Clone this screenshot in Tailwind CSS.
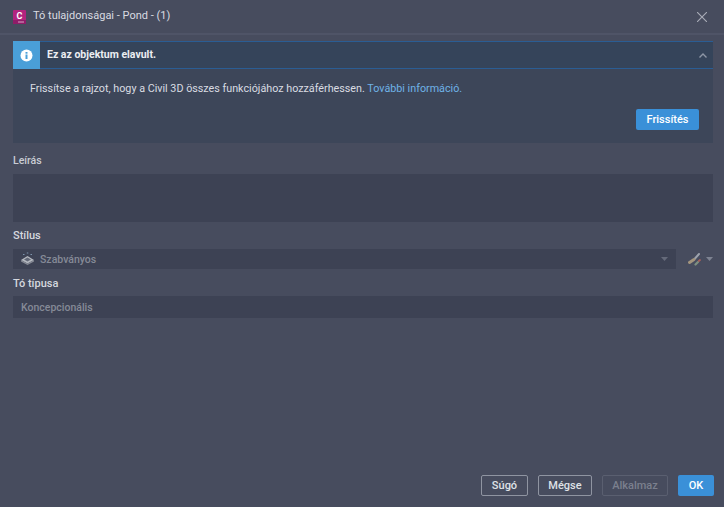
<!DOCTYPE html>
<html lang="en">
<head>
    <meta charset="UTF-8">
    <title>Tó tulajdonságai - Pond - (1)</title>
    <script src="https://cdn.jsdelivr.net/npm/@tailwindcss/browser@4"></script>
</head>
<body class="bg-[#474c5e] w-[724px] h-[507px] overflow-hidden flex flex-col font-['Roboto',sans-serif] text-[11px] text-[#d5d8df]">

    <!-- title bar -->
    <div class="h-[33px] shrink-0 flex items-center pl-[13px] pr-[17px] border-b-2 border-[#4f5467] box-content">
        <svg width="13" height="14" viewBox="0 0 13 14" class="mr-[7px]">
            <rect width="13" height="14" rx="1" fill="#b3237f"/>
            <rect y="10" width="13" height="4" fill="#8f1d68"/>
            <rect x="5" y="11.500" width="6" height="1" fill="#d9a5c6"/>
            <text x="6.500" y="8.500" text-anchor="middle" font-size="9" font-weight="700" fill="#fff" font-family="Roboto">C</text>
        </svg>
        <span class="text-[11px] text-[#d9dbe1]">Tó tulajdonságai - Pond - (1)</span>
        <svg width="10" height="10" viewBox="0 0 10 10" class="ml-auto" stroke="#a9adb8" stroke-width="1.1"><path d="M0 0 10 10M10 0 0 10"/></svg>
    </div>

    <div class="flex flex-col pl-[13px] pr-[11px] pt-[6px] flex-1">
        <!-- banner -->
        <div class="h-[102px] shrink-0 bg-[#3d4659] flex flex-col">
            <div class="h-[28px] shrink-0 flex items-center bg-[#35445a] border-y border-[#2a5d94]">
                <div class="w-[27px] h-[28px] -my-px bg-[#4a9fd8] flex items-center justify-center">
                    <svg width="13" height="13" viewBox="0 0 13 13">
                        <circle cx="6.500" cy="6.500" r="6" fill="#fff"/>
                        <rect x="5.500" y="5.500" width="2" height="4.500" fill="#4a9fd8"/>
                        <rect x="5.500" y="3" width="2" height="1.700" fill="#4a9fd8"/>
                    </svg>
                </div>
                <span class="ml-[7px] font-bold text-[10.5px] text-[#eceef2]">Ez az objektum elavult.</span>
                <svg width="8" height="5" viewBox="0 0 8 5" class="ml-auto mr-[6px]" fill="none" stroke="#8e96a6" stroke-width="1.4"><path d="M.5 4.500 4 1l3.500 3.500"/></svg>
            </div>
            <p class="mt-[12px] ml-[17px] leading-[16px] text-[10.75px] text-[#d9dce2]">Frissítse a rajzot, hogy a Civil 3D összes funkciójához hozzáférhessen. <span class="text-[#6fb2e6]">További információ.</span></p>
            <div class="flex justify-end mt-[12px] mr-[14px]">
                <button class="w-[63px] h-[21px] pt-[2px] rounded-[2px] bg-[#3a90d8] text-white text-[11px] font-medium">Frissítés</button>
            </div>
        </div>

        <label class="mt-[10px] h-[15px] leading-[16px] text-[10.5px] font-medium text-[#c9ccd4]">Leírás</label>
        <div class="mt-[6px] h-[48px] bg-[#3d4254]"></div>

        <label class="mt-[6px] h-[15px] leading-[16px] font-medium text-[#d5d8df]">Stílus</label>
        <div class="mt-[6px] flex items-center h-[20px]">
            <div class="flex-1 h-[20px] bg-[#3d4254] flex items-center pl-[7px] pr-[8px]">
                <svg width="15" height="14" viewBox="0 0 15 14" class="mr-[5px]">
                    <path d="M1 8 7.500 4 14 8 7.500 11.500Z" fill="#b4b8bf"/>
                    <path d="M1 8v1.500L7.500 13 14 9.500V8L7.500 11.500Z" fill="#858994"/>
                    <path d="M4 7.500 7.500 5.500 11 7.500 7.500 9.500Z" fill="#626877"/>
                    <path d="M3 2.500h1.500M6.800 1h1.500M10.500 2.500H12" stroke="#7d94ad" stroke-width="1"/>
                </svg>
                <span class="text-[#858a97] text-[10.5px] font-medium pt-[2px]">Szabványos</span>
                <svg width="7" height="4" viewBox="0 0 7 4" class="ml-auto"><path d="M0 0h7L3.500 4Z" fill="#656a7a"/></svg>
            </div>
            <div class="w-[37px] shrink-0 flex items-center pl-[12px]">
                <svg width="15" height="14" viewBox="0 0 15 14" fill="none" stroke-linecap="round">
                    <path d="M11 2 7 6.500" stroke="#9ea3ad" stroke-width="2"/>
                    <path d="M1.500 10.500 6 7.500" stroke="#a3957e" stroke-width="3"/>
                    <path d="M7.500 12.500 10 10" stroke="#7f9080" stroke-width="2.200"/>
                    <path d="M10.800 9 12 8" stroke="#a8605c" stroke-width="1.800"/>
                </svg>
                <svg width="7" height="4" viewBox="0 0 7 4" class="ml-[3px]"><path d="M0 0h7L3.500 4Z" fill="#7e8392"/></svg>
            </div>
        </div>

        <label class="mt-[7px] h-[15px] leading-[16px] font-medium text-[#d5d8df]">Tó típusa</label>
        <div class="mt-[5px] h-[22px] bg-[#3d4254] flex items-center pl-[8px] pt-[2px] text-[10.5px] text-[#858a97] font-medium">Koncepcionális</div>

        <!-- buttons -->
        <div class="mt-auto mb-[11px] -mr-px flex justify-end font-medium">
            <button class="w-[47px] h-[21px] pt-[2px] rounded-[2px] border border-[#8f94a1] text-[#dfe1e6] text-[11px] font-medium">Súgó</button>
            <button class="ml-[10px] w-[54px] h-[21px] pt-[2px] rounded-[2px] border border-[#8f94a1] text-[#dfe1e6] text-[11px] font-medium">Mégse</button>
            <button class="ml-[10px] w-[66px] h-[21px] pt-[2px] rounded-[2px] border border-[#5a5f70] text-[#7b808e] text-[11px] font-medium">Alkalmaz</button>
            <button class="ml-[10px] w-[36px] h-[21px] pt-[2px] rounded-[2px] bg-[#3a90d8] text-white text-[11px] font-medium">OK</button>
        </div>
    </div>

</body>
</html>
